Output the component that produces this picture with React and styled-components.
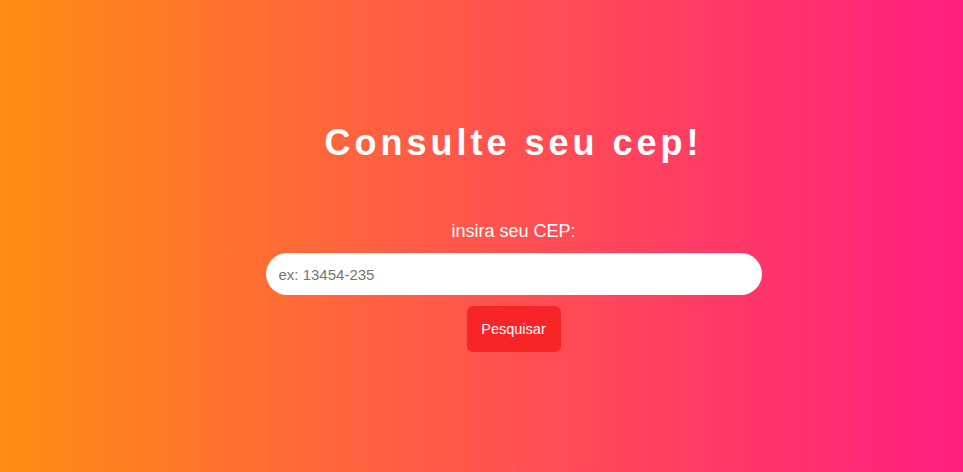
import React from 'react';
import styled, { createGlobalStyle } from 'styled-components';

const Global = createGlobalStyle`
  body {
    margin: 0;
    font-family: "Liberation Sans", Arial, sans-serif;
  }
`;

const Page = styled.main`
  height: 472px;
  background: linear-gradient(to right, #ff8c12 0%, #ff5a48 45%, #ff1e80 100%);
  display: flex;
  flex-direction: column;
  align-items: center;
  padding: 122px 0 0 64px;
  box-sizing: border-box;
`;

const Title = styled.h1`
  margin: 0;
  color: #fff;
  font-size: 36px;
  font-weight: bold;
  letter-spacing: 4px;
`;

const Form = styled.form`
  display: flex;
  flex-direction: column;
  align-items: center;
  margin-top: 57px;
`;

const Label = styled.label`
  color: #fff;
  font-size: 18px;
  margin-bottom: 11px;
`;

const Input = styled.input`
  width: 496px;
  height: 42px;
  box-sizing: border-box;
  border: none;
  border-radius: 21px;
  padding: 0 13px;
  font-family: inherit;
  font-size: 15px;
  outline: none;
  &::placeholder {
    color: #757575;
  }
`;

const Button = styled.button`
  margin-top: 11px;
  width: 94px;
  height: 46px;
  border: none;
  border-radius: 6px;
  background: #f72428;
  color: #fff;
  font-family: inherit;
  font-size: 14.5px;
  cursor: pointer;
`;

export default function App() {
  return (
    <>
      <Global />
      <Page>
        <Title>Consulte seu cep!</Title>
        <Form onSubmit={e => e.preventDefault()}>
          <Label htmlFor="cep">insira seu CEP:</Label>
          <Input id="cep" placeholder="ex: 13454-235" />
          <Button type="submit">Pesquisar</Button>
        </Form>
      </Page>
    </>
  );
}
